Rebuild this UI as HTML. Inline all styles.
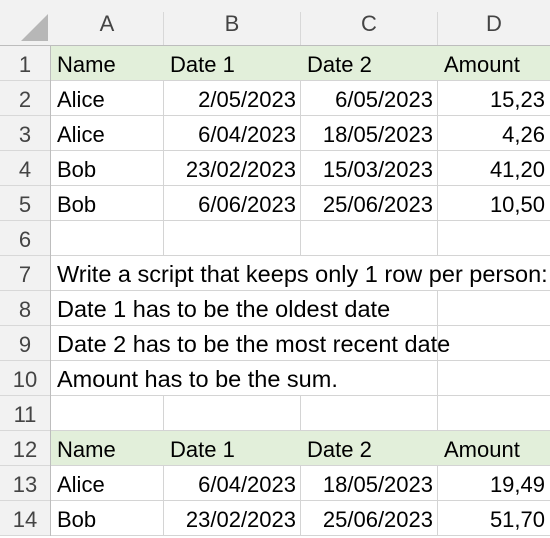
<!DOCTYPE html>
<html><head><style>
body{margin:0;width:550px;height:536px;overflow:hidden;background:#fff;font-family:"Liberation Sans",sans-serif;}
.hdr{position:absolute;top:0;left:0;width:550px;height:45px;background:#f2f2f2;border-bottom:1px solid #bdbdbd;}
.rh{position:absolute;left:0;top:46px;width:50px;height:490px;background:#f2f2f2;border-right:1px solid #bdbdbd;}
.c{position:absolute;box-sizing:border-box;height:35px;line-height:37px;font-size:22px;color:#000;white-space:nowrap;padding:0 6px;}
.h{position:absolute;font-size:22px;color:#444;text-align:center;line-height:47px;top:0;height:45px;}
.r{position:absolute;left:0;width:50px;text-align:center;font-size:22px;color:#444;height:35px;line-height:37px;}
.g{background:#e2efda;}
.vl{position:absolute;width:1px;background:#d4d4d4;}
.hl{position:absolute;height:1px;background:#d4d4d4;left:51px;width:499px;}
</style></head><body>
<div class="hdr"></div>
<div class="rh"></div>
<svg style="position:absolute;left:20px;top:14px" width="29" height="28"><polygon points="28,0 28,27 1,27" fill="#b7b7b7"/></svg>
<div class="h" style="left:51px;width:112px">A</div>
<div class="h" style="left:164px;width:136px">B</div>
<div class="h" style="left:301px;width:136px">C</div>
<div class="h" style="left:438px;width:112px">D</div>
<div class="vl" style="left:163px;top:12px;height:33px;background:#d8d8d8"></div>
<div class="vl" style="left:300px;top:12px;height:33px;background:#d8d8d8"></div>
<div class="vl" style="left:437px;top:12px;height:33px;background:#d8d8d8"></div>
<div id="g"></div>
<script>
var rows=[
["Name","Date 1","Date 2","Amount",1],
["Alice","2/05/2023","6/05/2023","15,23"],
["Alice","6/04/2023","18/05/2023","4,26"],
["Bob","23/02/2023","15/03/2023","41,20"],
["Bob","6/06/2023","25/06/2023","10,50"],
["","","",""],
["Write a script that keeps only 1 row per person:",null],
["Date 1 has to be the oldest date",null],
["Date 2 has to be the most recent date",null],
["Amount has to be the sum.",null],
["","","",""],
["Name","Date 1","Date 2","Amount",1],
["Alice","6/04/2023","18/05/2023","19,49"],
["Bob","23/02/2023","25/06/2023","51,70"]];
var xs=[51,164,301,438,550],h="";
rows.forEach(function(r,i){
var t=46+i*35;
h+='<div class="r" style="top:'+t+'px">'+(i+1)+'</div>';
if(r[4]) h+='<div class="g" style="position:absolute;left:51px;top:'+t+'px;width:499px;height:34px"></div>';
if(r[1]===null){
h+='<div class="c" style="left:51px;top:'+t+'px;font-size:23.5px">'+r[0]+'</div>';
if(r[0].length<40) h+='<div class="vl" style="left:437px;top:'+t+'px;height:35px"></div>';
}else{
for(var j=0;j<4;j++){
var al=(r[4]||j==0)?'left':'right';
h+='<div class="c" style="left:'+xs[j]+'px;width:'+(xs[j+1]-xs[j])+'px;top:'+t+'px;text-align:'+al+';'+(al=='right'?'padding-right:5px':'')+'">'+r[j]+'</div>';
if(j>0&&!r[4]) h+='<div class="vl" style="left:'+(xs[j]-1)+'px;top:'+t+'px;height:35px"></div>';
}}
h+='<div class="hl" style="top:'+(t+34)+'px"></div>';
h+='<div style="position:absolute;left:0;width:50px;height:1px;background:#d8d8d8;top:'+(t+34)+'px"></div>';
});
document.getElementById('g').innerHTML=h;
</script>
</body></html>
